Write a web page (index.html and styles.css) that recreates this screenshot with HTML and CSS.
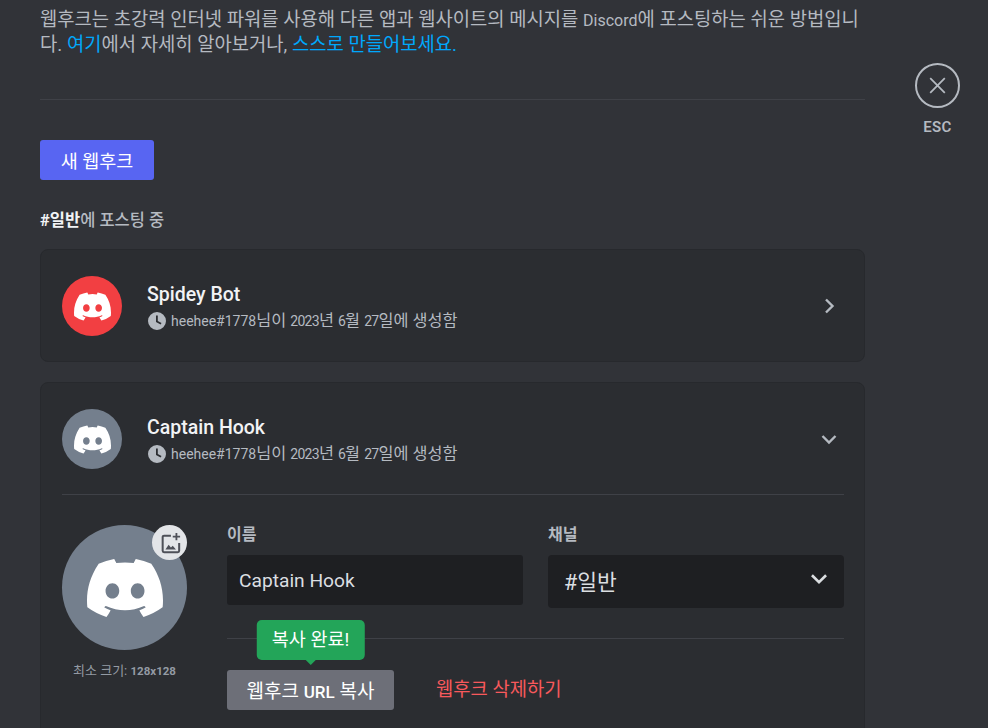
FILE: index.html
```html
<!DOCTYPE html>
<html lang="ko">
<head>
    <meta charset="UTF-8">
    <meta name="viewport" content="width=device-width, initial-scale=1.0">
    <title>웹후크</title>
    <link rel="stylesheet" href="styles.css">
</head>
<body>

<svg class="defs" width="0" height="0" aria-hidden="true">
    <symbol id="clyde" viewBox="0 0 24 24">
        <path fill="currentColor" d="M20.317 4.37a19.791 19.791 0 0 0-4.885-1.515.074.074 0 0 0-.079.037c-.21.375-.444.864-.608 1.25a18.27 18.27 0 0 0-5.487 0 12.64 12.64 0 0 0-.617-1.25.077.077 0 0 0-.079-.037A19.736 19.736 0 0 0 3.677 4.37a.07.07 0 0 0-.032.027C.533 9.046-.32 13.58.099 18.057a.082.082 0 0 0 .031.057 19.9 19.9 0 0 0 5.993 3.03.078.078 0 0 0 .084-.028 14.09 14.09 0 0 0 1.226-1.994.076.076 0 0 0-.041-.106 13.107 13.107 0 0 1-1.872-.892.077.077 0 0 1-.008-.128 10.2 10.2 0 0 0 .372-.292.074.074 0 0 1 .077-.01c3.928 1.793 8.18 1.793 12.062 0a.074.074 0 0 1 .078.01c.12.098.246.198.373.292a.077.077 0 0 1-.006.127 12.299 12.299 0 0 1-1.873.892.077.077 0 0 0-.041.107c.36.698.772 1.362 1.225 1.993a.076.076 0 0 0 .084.028 19.839 19.839 0 0 0 6.002-3.03.077.077 0 0 0 .032-.054c.5-5.177-.838-9.674-3.549-13.66a.061.061 0 0 0-.031-.03zM8.02 15.33c-1.183 0-2.157-1.085-2.157-2.419 0-1.333.956-2.419 2.157-2.419 1.21 0 2.176 1.096 2.157 2.42 0 1.333-.956 2.418-2.157 2.418zm7.975 0c-1.183 0-2.157-1.085-2.157-2.419 0-1.333.955-2.419 2.157-2.419 1.21 0 2.176 1.096 2.157 2.42 0 1.333-.946 2.418-2.157 2.418z"/>
    </symbol>
    <symbol id="clock" viewBox="0 0 18 18">
        <path fill="currentColor" d="M9 0a9 9 0 1 0 0 18A9 9 0 0 0 9 0zm3.6 12.6L8 10V3.6h1.8v5.3l3.7 2.2-.9 1.5z"/>
    </symbol>
</svg>

<div class="page">
    <main class="content">
        <p class="intro">웹후크는 초강력 인터넷 파워를 사용해 다른 앱과 웹사이트의 메시지를 <span class="en">Discord</span>에 포스팅하는 쉬운 방법입니다. <a href="#">여기</a>에서 자세히 알아보거나, <a href="#">스스로 만들어보세요.</a></p>
        <hr class="divider">
        <button class="btn-new">새 웹후크</button>
        <p class="posting"><strong>#일반</strong>에 포스팅 중</p>

        <section class="card">
            <div class="card-head">
                <span class="avatar red"><svg class="clyde"><use href="#clyde"/></svg></span>
                <div class="card-info">
                    <div class="name">Spidey Bot</div>
                    <div class="meta"><svg class="clock"><use href="#clock"/></svg><span><span class="en">heehee#1778</span>님이 <span class="num">2023</span>년 <span class="num">6</span>월 <span class="num">27</span>일에 생성함</span></div>
                </div>
                <svg class="caret" viewBox="0 0 24 24"><path d="M9 5.500L15.500 12 9 18.500"/></svg>
            </div>
        </section>

        <section class="card">
            <div class="card-head">
                <span class="avatar grey"><svg class="clyde"><use href="#clyde"/></svg></span>
                <div class="card-info">
                    <div class="name">Captain Hook</div>
                    <div class="meta"><svg class="clock"><use href="#clock"/></svg><span><span class="en">heehee#1778</span>님이 <span class="num">2023</span>년 <span class="num">6</span>월 <span class="num">27</span>일에 생성함</span></div>
                </div>
                <svg class="caret" viewBox="0 0 24 24"><path d="M5.500 9l6.500 6.500L18.500 9"/></svg>
            </div>
            <div class="card-body">
                <div class="upload">
                    <div class="big-avatar">
                        <svg class="clyde"><use href="#clyde"/></svg>
                        <span class="badge">
                            <svg viewBox="0 0 24 24"><path fill="none" stroke="currentColor" stroke-width="2.200" d="M13 4H5.500A1.500 1.500 0 0 0 4 5.500V20.500A1.500 1.500 0 0 0 5.500 22H20.500A1.500 1.500 0 0 0 22 20.500V12"/><path fill="currentColor" d="M7 19l3.500-5 2.500 3 2-2 3.500 4z"/><path fill="currentColor" d="M18 1h2v3h3v2h-3v3h-2V6h-3V4h3z"/></svg>
                        </span>
                    </div>
                    <div class="min-size">최소 크기: <b class="en">128x128</b></div>
                </div>
                <div class="form">
                    <div class="fields">
                        <div class="field">
                            <label>이름</label>
                            <div class="input">Captain Hook</div>
                        </div>
                        <div class="field">
                            <label>채널</label>
                            <div class="select">
                                <span>#일반</span>
                                <svg viewBox="0 0 24 24"><path d="M5.500 8.500L12 15l6.500-6.500"/></svg>
                            </div>
                        </div>
                    </div>
                    <hr class="divider form-line">
                    <div class="actions">
                        <div class="copy-wrap">
                            <button class="btn-copy">웹후크 <span class="en">URL</span> 복사</button>
                            <div class="tooltip">복사 완료!</div>
                        </div>
                        <a href="#" class="delete">웹후크 삭제하기</a>
                    </div>
                </div>
            </div>
        </section>
    </main>

    <aside class="tools">
        <div class="close">
            <svg viewBox="0 0 24 24"><path d="M5 5l14 14M19 5L5 19"/></svg>
        </div>
        <div class="esc">ESC</div>
    </aside>
</div>

</body>
</html>
```

FILE: styles.css
```css
html, body {
    margin: 0;
    height: 100%;
    overflow: hidden;
}

body {
    background-color: #313338;
    color: #b5bac1;
    font-family: Roboto, "Noto Sans CJK KR", sans-serif;
    font-size: 18.5px;
}

/* hangul runs large next to the latin text in the original */
.en {
    font-size: 16px;
}

.defs {
    display: block;
}

.page {
    display: flex;
    padding: 8px 0 0 40px;
}

.content {
    width: 825px;
    flex: none;
}

.intro {
    margin: 0;
    font-size: 18.8px;
    line-height: 25px;
    word-break: break-all;
}

.intro a {
    color: #00a8fc;
    text-decoration: none;
}

.divider {
    border: none;
    height: 1px;
    margin: 0;
    background-color: #3f4147;
}

.content > .divider {
    margin-top: 41px;
}

.btn-new {
    display: block;
    width: 114px;
    height: 40px;
    margin-top: 40px;
    border: none;
    border-radius: 3px;
    background-color: #5865f2;
    color: #fff;
    font: inherit;
}

.posting {
    margin: 31px 0 18px;
    font-size: 16.5px;
    line-height: 20px;
    font-weight: 500;
}

.posting strong {
    color: #f2f3f5;
    font-weight: 700;
}

.card {
    background-color: #2b2d31;
    border: 1px solid #27292d;
    border-radius: 8px;
    margin-bottom: 20px;
}

.card-head {
    display: flex;
    align-items: center;
    padding: 26px 21px 25px;
}

.avatar {
    width: 60px;
    height: 60px;
    flex: none;
    border-radius: 50%;
    color: #fff;
    display: flex;
    align-items: center;
    justify-content: center;
}

.avatar.red {
    background-color: #f23f42;
}

.avatar.grey,
.big-avatar {
    background-color: #747f8d;
}

.avatar .clyde {
    width: 37px;
    height: 37px;
}

.card-info {
    margin-left: 25px;
    flex: 1;
}

.name {
    color: #f2f3f5;
    font-size: 19.5px;
    line-height: 26px;
    font-weight: 500;
}

.meta {
    display: flex;
    align-items: center;
    margin-top: 3px;
    font-size: 16.3px;
    line-height: 20px;
}

.meta .en {
    font-size: 14px;
}

.num {
    font-size: 14px;
    letter-spacing: -0.7px;
}

.clock {
    width: 18px;
    height: 18px;
    margin: 0 5px 0 1px;
}

.caret {
    width: 24px;
    height: 24px;
    margin-right: 2px;
    fill: none;
    stroke: #b5bac1;
    stroke-width: 2.4;
}

.card-body {
    display: flex;
    gap: 40px;
    margin: 0 20px 0 21px;
    padding-top: 30px;
    padding-bottom: 30px;
    border-top: 1px solid #3f4147;
}

.upload {
    width: 125px;
    flex: none;
}

.big-avatar {
    position: relative;
    width: 125px;
    height: 125px;
    border-radius: 50%;
    color: #fff;
    display: flex;
    align-items: center;
    justify-content: center;
}

.big-avatar .clyde {
    width: 76px;
    height: 76px;
}

.badge {
    position: absolute;
    top: 0;
    right: 0;
    width: 35px;
    height: 35px;
    border-radius: 50%;
    background-color: #e3e5e8;
    color: #4e5058;
    display: flex;
    align-items: center;
    justify-content: center;
}

.badge svg {
    width: 22px;
    height: 22px;
}

.min-size {
    margin: 13px -10px 0;
    text-align: center;
    font-size: 13px;
    line-height: 16px;
    color: #949ba4;
}

.min-size .en {
    font-size: 11.5px;
}

.form {
    flex: 1;
}

.fields {
    display: flex;
    gap: 25px;
}

.field {
    flex: 1;
}

.field label {
    display: block;
    margin: 0 0 10px;
    font-size: 16px;
    line-height: 20px;
    font-weight: 600;
}

.input {
    height: 50px;
    padding: 0 12px;
    box-sizing: border-box;
    background-color: #1e1f22;
    border-radius: 3px;
    color: #dbdee1;
    font-size: 19.2px;
    line-height: 51px;
}

.select {
    height: 53px;
    padding: 0 16px 2px;
    box-sizing: border-box;
    background-color: #1e1f22;
    border-radius: 4px;
    color: #dbdee1;
    font-size: 21.5px;
    display: flex;
    align-items: center;
    justify-content: space-between;
}

.select svg {
    width: 26px;
    height: 26px;
    margin: 0 -4px 3px 0;
    fill: none;
    stroke: #dbdee1;
    stroke-width: 2.4;
}

.form-line {
    margin-top: 30px;
}

.actions {
    display: flex;
    align-items: center;
    margin-top: 31px;
}

.copy-wrap {
    position: relative;
}

.btn-copy {
    display: block;
    width: 167px;
    height: 40px;
    padding: 0 0 2px;
    border: none;
    border-radius: 3px;
    background-color: #6d6f78;
    color: #fff;
    font: inherit;
    font-size: 19px;
}

.btn-copy .en {
    font-size: 17px;
    font-weight: 500;
}

.tooltip {
    position: absolute;
    left: 50%;
    bottom: 50px;
    transform: translateX(-50%);
    padding: 0 15.5px;
    height: 40px;
    line-height: 40px;
    white-space: nowrap;
    background-color: #23a559;
    border-radius: 5px;
    color: #fff;
}

.tooltip::after {
    content: "";
    position: absolute;
    top: 100%;
    left: 50%;
    margin-left: -5px;
    border: 5px solid transparent;
    border-bottom: none;
    border-top-color: #23a559;
}

.delete {
    margin-left: 42px;
    padding-bottom: 6px;
    color: #f8595c;
    font-size: 18.8px;
    text-decoration: none;
}

.tools {
    margin-left: 50px;
    margin-top: 55px;
    width: 45px;
    display: flex;
    flex-direction: column;
    align-items: center;
}

.close {
    width: 45px;
    height: 45px;
    flex: none;
    box-sizing: border-box;
    border: 2px solid #b5bac1;
    border-radius: 50%;
    display: flex;
    align-items: center;
    justify-content: center;
}

.close svg {
    width: 25px;
    height: 25px;
    fill: none;
    stroke: #b5bac1;
    stroke-width: 1.7;
}

.esc {
    margin-top: 11px;
    font-size: 15px;
    letter-spacing: 0.3px;
    line-height: 16px;
    font-weight: 600;
    color: #b5bac1;
}
```
